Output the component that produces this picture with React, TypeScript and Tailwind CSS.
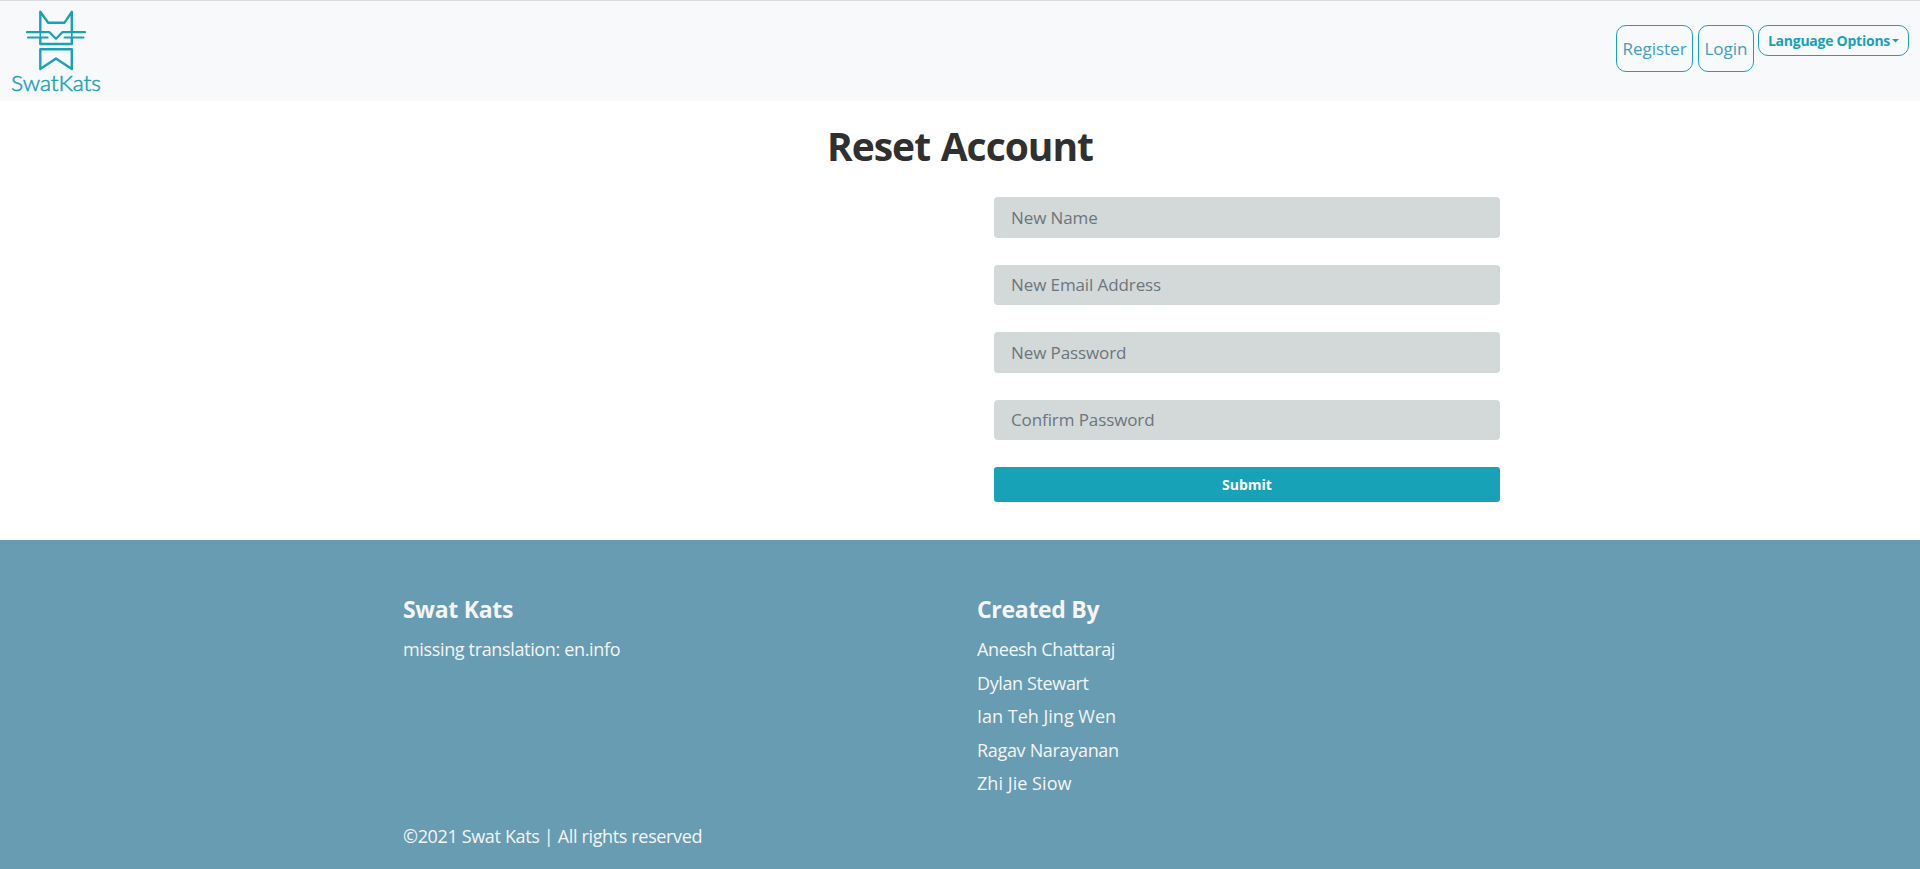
const fields = ["New Name", "New Email Address", "New Password", "Confirm Password"];
const authors = [
  { name: "Aneesh Chattaraj", tracking: "tracking-[-0.38px]" },
  { name: "Dylan Stewart", tracking: "tracking-[-0.38px]" },
  { name: "Ian Teh Jing Wen", tracking: "tracking-normal" },
  { name: "Ragav Narayanan", tracking: "tracking-[-0.32px]" },
  { name: "Zhi Jie Siow", tracking: "tracking-[0.05px]" },
];

function Logo() {
  return (
    <svg width="120" height="100" viewBox="0 0 120 100" fill="none" stroke="#18a2b8" strokeWidth="2.4" strokeLinejoin="round" className="block">
      <path d="M40.3 31V10.8l7.9 11h16.2l7.4-11V31M40.3 36.3V43h31.5v-6.7" />
      <path d="M40.3 30v8M71.8 30v8" strokeWidth="1.6" />
      <path d="M27 31.2h22.5l6.5 6.5 6.3-6.5H85M28 36.5h19.5M64.7 36.5h18.8" strokeLinecap="round" strokeWidth="2.2" />
      <path d="M40.3 48.2h31.5v19.9L56 57.5 40.3 68.1z" />
      <text x="11" y="90.2" fill="#18a2b8" stroke="#18a2b8" strokeWidth="0.5" fontFamily="Lato, sans-serif" fontWeight="300" fontSize="21.5" textLength="90" lengthAdjust="spacingAndGlyphs">SwatKats</text>
    </svg>
  );
}

export default function App() {
  return (
    <div className="flex h-[869px] w-full flex-col overflow-hidden bg-white font-['Open_Sans',sans-serif]">
      <nav className="flex h-[101px] items-start justify-between border-t border-[#dadcdf] bg-[#f8f9fb] pr-[11px] text-[#18a2b8]">
        <Logo />
        <div className="flex items-start pt-6">
          <a className="mr-[5px] flex h-[47px] w-[77px] items-center justify-center rounded-[10px] border border-[#18a2b8] text-[17px] text-[#3f9fbd]">Register</a>
          <a className="mr-1 flex h-[47px] w-14 items-center justify-center rounded-[10px] border border-[#18a2b8] text-[17px] text-[#3f9fbd]">Login</a>
          <button className="flex h-[31px] w-[151px] items-center justify-center rounded-[10px] border border-[#18a2b8] text-sm font-bold">
            <span className="tracking-[-0.25px]">Language Options</span>
            <svg width="7" height="4" viewBox="0 0 7 4" className="ml-[2px]"><path d="M0 0h7L3.5 3.5z" fill="#18a2b8" /></svg>
          </button>
        </div>
      </nav>

      <main className="flex h-[439px] shrink-0 flex-col">
        <h1 className="mt-[17px] text-center text-[39px] leading-[56px] font-bold tracking-[-1px] text-[#303030] [word-spacing:1.5px]">Reset Account</h1>
        <form className="mt-[23.3px] ml-[994px] flex w-[506px] flex-col gap-[26.9px]">
          {fields.map((f) => (
            <input key={f} placeholder={f} className="block h-[40.6px] w-full rounded bg-[#d3d9d9] px-[17px] pb-[0.5px] text-[17px] tracking-[-0.1px] placeholder:text-[#6c757d]" />
          ))}
          <button type="button" className="h-[35px] rounded-[3px] bg-[#18a2b8] pt-px text-sm font-bold text-white">Submit</button>
        </form>
      </main>

      <footer className="flex flex-1 flex-col bg-[#679cb2] pt-[51px] pl-[403px] text-[18px] text-[#f5f5f5]">
        <div className="flex">
          <section className="w-[574px]">
            <h2 className="text-[23px] leading-[36px] font-bold tracking-[-0.3px]">Swat Kats</h2>
            <p className="mt-[6px] leading-[33.6px] tracking-[-0.35px]">missing translation: en.info</p>
          </section>
          <section>
            <h2 className="text-[23px] leading-[36px] font-bold tracking-[-0.3px]">Created By</h2>
            <ul className="mt-[6px] leading-[33.6px]">
              {authors.map((a) => <li key={a.name} className={a.tracking}>{a.name}</li>)}
            </ul>
          </section>
        </div>
        <p className="mt-[19px] leading-[33.6px] tracking-[-0.35px]">©2021 Swat Kats | All rights reserved</p>
      </footer>
    </div>
  );
}
